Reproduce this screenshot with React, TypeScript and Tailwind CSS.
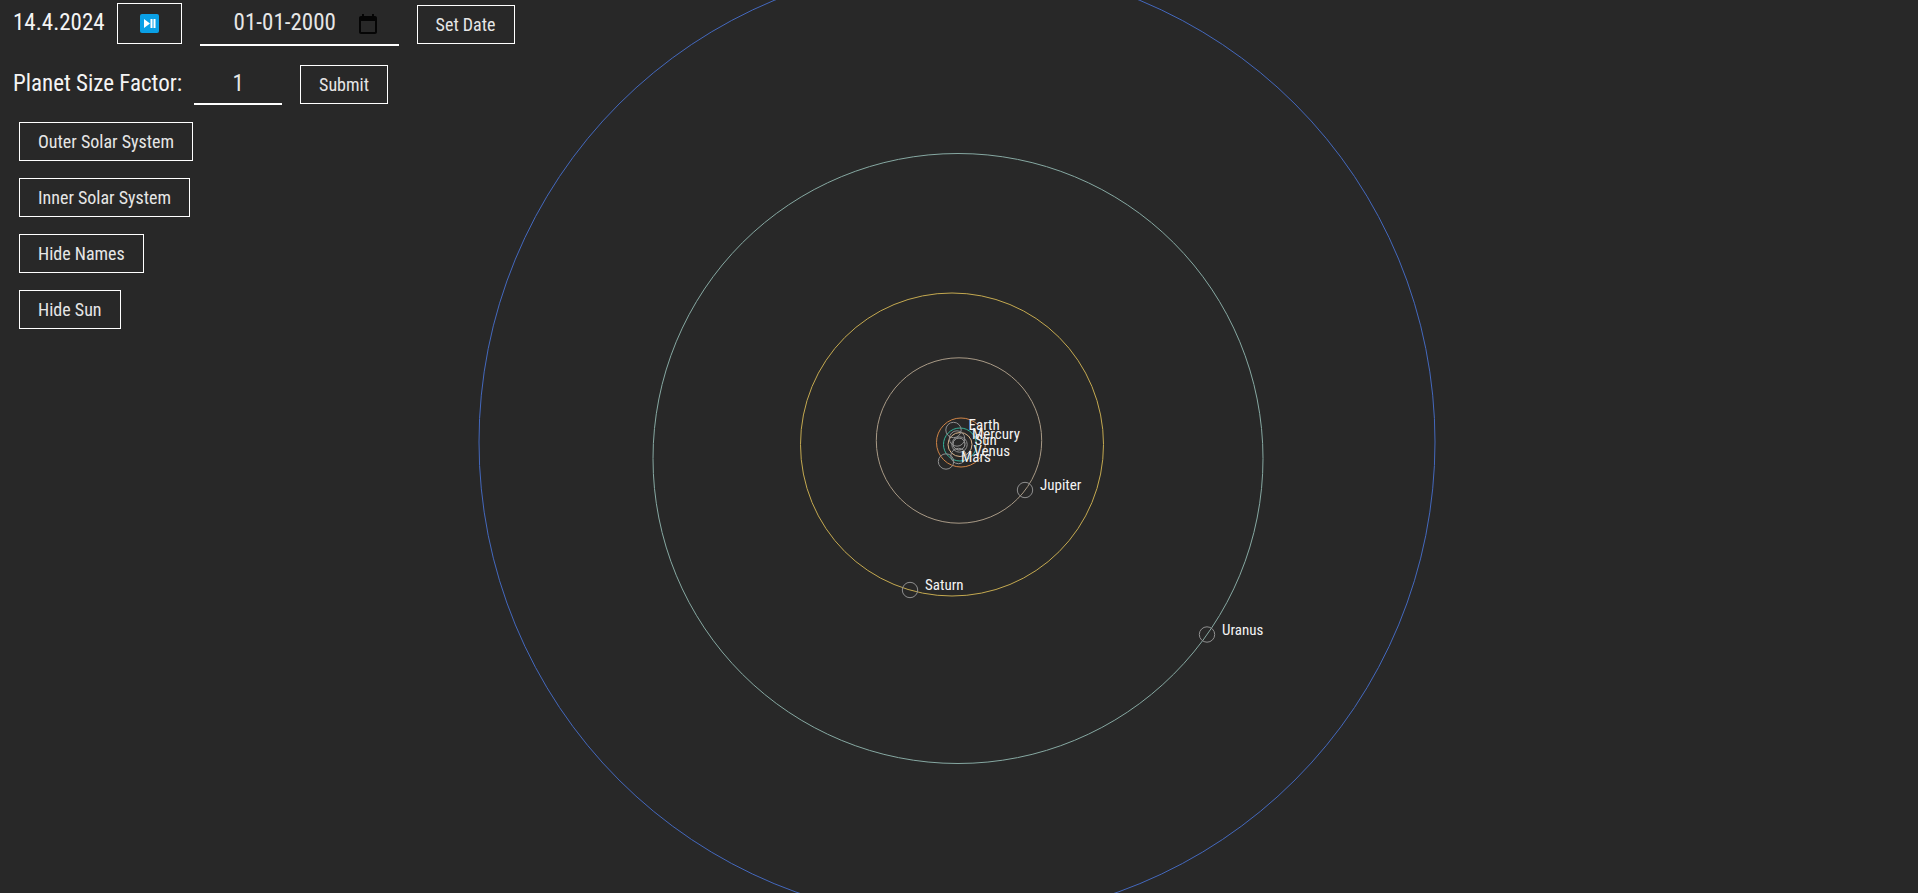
const orbits = [
  { name: 'Neptune', cx: 957, cy: 442, r: 478, color: '#4468bd' },
  { name: 'Uranus', cx: 958, cy: 458.5, r: 305, color: '#86a8a2' },
  { name: 'Saturn', cx: 952, cy: 444.5, r: 151.5, color: '#c4a950' },
  { name: 'Jupiter', cx: 959, cy: 440.5, r: 82.7, color: '#a89a86' },
  { name: 'Mars', cx: 961, cy: 442.5, r: 24.5, color: '#d08446' },
  { name: 'Earth', cx: 960, cy: 444.5, r: 16.5, color: '#35b39a' },
  { name: 'Venus', cx: 960, cy: 444.5, r: 12, color: '#d8b48c' },
  { name: 'Mercury', cx: 959, cy: 444, r: 6, color: '#a5a5a5' },
];

const bodies = [
  { name: 'Sun', x: 959.5, y: 444.5 },
  { name: 'Mercury', x: 957, y: 438.5 },
  { name: 'Venus', x: 958.5, y: 456 },
  { name: 'Earth', x: 953.5, y: 430 },
  { name: 'Mars', x: 946, y: 461.5 },
  { name: 'Jupiter', x: 1025, y: 490 },
  { name: 'Saturn', x: 910, y: 590 },
  { name: 'Uranus', x: 1207, y: 634.5 },
];

const button =
  'h-[39px] cursor-pointer border border-white px-[18px] text-lg leading-6 text-[#e6e6e6] hover:bg-white/10';

function PlayPauseIcon() {
  return (
    <svg width="19" height="19" viewBox="0 0 19 19" aria-hidden="true">
      <rect width="19" height="19" rx="2" fill="#0aa0e6" />
      <path d="M4 5v9l6-4.500zM10.500 5h2v9h-2zM13.500 5h2v9h-2z" fill="#fff" />
    </svg>
  );
}

function CalendarIcon() {
  return (
    <svg width="18" height="20" viewBox="0 0 18 20" className="shrink-0" aria-hidden="true">
      <path
        d="M16 2h-1V0h-2v2H5V0H3v2H2C.9 2 0 2.900 0 4v14c0 1.100.9 2 2 2h14c1.100 0 2-.9 2-2V4c0-1.100-.9-2-2-2zm0 16H2V7h14z"
        fill="#050505"
      />
    </svg>
  );
}

function OrbitMap() {
  return (
    <svg
      className="absolute inset-0 h-full w-full"
      viewBox="0 0 1918 893"
      preserveAspectRatio="xMidYMid slice"
      role="img"
      aria-label="Solar system"
    >
      {orbits.map((o) => (
        <circle key={o.name} cx={o.cx} cy={o.cy} r={o.r} fill="none" stroke={o.color} strokeWidth="1" />
      ))}
      {bodies.map((b) => (
        <g key={b.name}>
          <circle cx={b.x} cy={b.y} r="7.700" fill="none" stroke="#8f8f8f" strokeWidth="1" />
          <text x={b.x + 15} y={b.y} fill="#f4f4f4" fontSize="15">
            {b.name}
          </text>
        </g>
      ))}
    </svg>
  );
}

export default function App() {
  return (
    <div className="relative min-h-screen overflow-hidden bg-[#282828] font-['Roboto_Condensed','Liberation_Sans_Narrow',sans-serif] text-[#f4f4f4]">
      <OrbitMap />
      <main className="relative flex flex-col items-start px-[13px] pt-[3px]">
        <div className="flex items-center">
          <span className="self-start text-[23px] leading-10">14.4.2024</span>
          <button
            className="ml-3 flex h-[41px] w-[65px] cursor-pointer items-center justify-center self-start border border-white"
            aria-label="Play or pause"
          >
            <PlayPauseIcon />
          </button>
          <label className="ml-[18px] flex h-[43px] w-[199px] items-center border-b-2 border-white pr-[22px] pl-[34px]">
            <input
              className="w-full min-w-0 bg-transparent text-[23px] text-[#e6e6e6] outline-none"
              defaultValue="01-01-2000"
              aria-label="Date"
            />
            <CalendarIcon />
          </label>
          <button className={`${button} ml-[18px]`}>Set Date</button>
        </div>
        <div className="mt-[18px] flex items-center">
          <label htmlFor="factor" className="self-start text-[23px] leading-10">
            Planet Size Factor:
          </label>
          <input
            id="factor"
            className="ml-3 h-[41px] w-[88px] border-b-2 border-white bg-transparent text-center text-[23px] text-[#e6e6e6] outline-none"
            defaultValue="1"
          />
          <button className={`${button} ml-[18px]`}>Submit</button>
        </div>
        <div className="mt-[17px] ml-[6px] flex flex-col items-start gap-[17px]">
          <button className={button}>Outer Solar System</button>
          <button className={button}>Inner Solar System</button>
          <button className={button}>Hide Names</button>
          <button className={button}>Hide Sun</button>
        </div>
      </main>
    </div>
  );
}
